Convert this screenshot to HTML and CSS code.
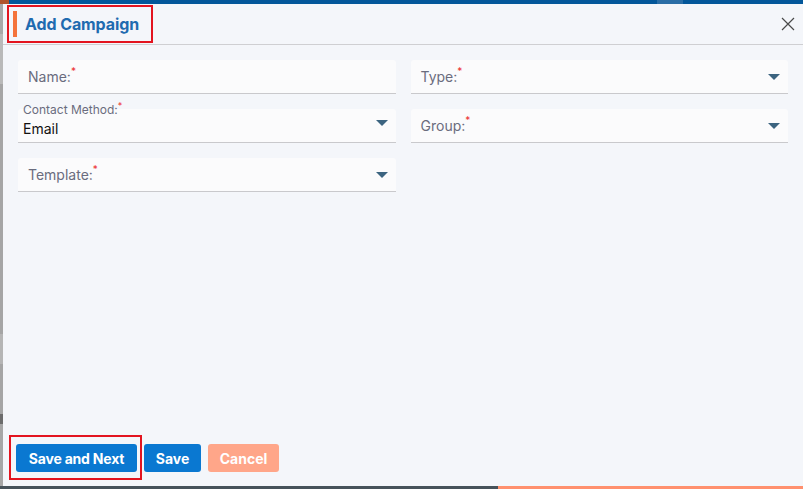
FILE: index.html
```html
<!DOCTYPE html>
<html>
<head>
<meta charset="utf-8">
<link rel="stylesheet" href="styles.css">
</head>
<body>
<div class="page">
  <div class="topbar"><span class="topbar-corner"></span><span class="topbar-fill"></span><span class="topbar-tab"></span><span class="topbar-fill2"></span></div>
  <div class="middle">
    <div class="leftstrip"></div>
    <div class="modal">
      <div class="modal-header">
        <div class="title-box">
          <span class="title-accent"></span>
          <h1 class="title">Add Campaign</h1>
        </div>
        <button class="close" aria-label="Close">
          <svg width="14" height="14" viewBox="0 0 14 14"><path d="M1 1 L13 13 M13 1 L1 13" stroke="#4a4a4a" stroke-width="1.2" fill="none"/></svg>
        </button>
      </div>
      <div class="modal-body">
        <div class="form-grid">
          <div class="field"><span class="label">Name:<sup class="req">*</sup></span></div>
          <div class="field"><span class="label">Type:<sup class="req">*</sup></span><span class="caret"></span></div>
          <div class="field field-filled">
            <span class="float-label">Contact Method:<sup class="req">*</sup></span>
            <span class="value">Email</span><span class="caret"></span>
          </div>
          <div class="field"><span class="label">Group:<sup class="req">*</sup></span><span class="caret"></span></div>
          <div class="field"><span class="label">Template:<sup class="req">*</sup></span><span class="caret"></span></div>
        </div>
      </div>
      <div class="modal-footer">
        <span class="mark"><button class="btn btn-primary btn-wide">Save and Next</button></span>
        <button class="btn btn-primary btn-save">Save</button>
        <button class="btn btn-cancel">Cancel</button>
      </div>
    </div>
  </div>
  <div class="bottombar"><span class="bottom-dark"></span><span class="bottom-orange"></span></div>
</div>
</body>
</html>
```

FILE: styles.css
```css
* { box-sizing: border-box; }
html, body { margin: 0; padding: 0; }
body {
  width: 803px;
  height: 489px;
  overflow: hidden;
  font-family: Inter, Roboto, "Liberation Sans", sans-serif;
  background: #f4f6fa;
}
.page {
  display: flex;
  flex-direction: column;
  width: 803px;
  height: 489px;
}
.topbar {
  display: flex;
  height: 4px;
  flex: none;
}
.topbar-corner { width: 9px; background: #b0542c; }
.topbar-fill { width: 648px; background: #03579a; }
.topbar-tab { width: 26px; background: #2b6ea6; }
.topbar-fill2 { flex: 1; background: #03579a; }
.middle {
  flex: 1;
  display: flex;
  min-height: 0;
}
.leftstrip {
  width: 3px;
  flex: none;
  background: linear-gradient(#a8a8a8 0 30px, #b9b9b9 30px 80px, #a5a5a5 80px 330px, #b5b5b5 330px 360px, #a5a5a5 360px 410px, #6c6c6c 410px 420px, #a6a6a6 420px);
}
.modal {
  flex: 1;
  display: flex;
  flex-direction: column;
  background: #f4f6fa;
}
.modal-header {
  height: 41px;
  flex: none;
  display: flex;
  align-items: center;
  justify-content: space-between;
  border-bottom: 1px solid #cfcfd2;
  padding: 0 7px 0 10px;
}
.title-box {
  display: flex;
  align-items: center;
  height: 26px;
  outline: 2px solid #e3141f;
  outline-offset: 4px;
  padding-right: 8px;
}
.title-accent {
  width: 4px;
  height: 26px;
  background: #f4733b;
  margin-right: 8px;
}
.title {
  margin: 0;
  font-size: 16px;
  font-weight: 700;
  color: #1f6bb0;
  letter-spacing: -0.1px;
}
.close {
  background: none;
  border: none;
  padding: 0;
  width: 16px;
  height: 16px;
  display: flex;
  align-items: center;
  justify-content: center;
  cursor: pointer;
}
.modal-body {
  flex: 1;
  padding: 15px 15px 0 15px;
}
.form-grid {
  display: grid;
  grid-template-columns: 1fr 1fr;
  column-gap: 15px;
  row-gap: 15px;
}
.field {
  position: relative;
  height: 34px;
  background: #fbfbfc;
  border-bottom: 1px solid #c9c9cc;
  border-radius: 3px 3px 0 0;
  display: flex;
  align-items: center;
  justify-content: space-between;
  padding: 0 8px 0 10px;
}
.label {
  font-size: 14px;
  color: #6a6c7e;
}
.req {
  color: #ec2f2f;
  font-size: 10px;
  vertical-align: top;
  position: relative;
  top: -3px;
}
.float-label .req { top: -4px; font-size: 9px; }
.field-filled {
  padding-left: 5px;
  align-items: flex-end;
  padding-bottom: 5px;
}
.field-filled .caret { align-self: center; }
.float-label {
  position: absolute;
  left: 5px;
  top: -6px;
  font-size: 12px;
  color: #6a6c7e;
  line-height: 14px;
}
.value {
  font-size: 14px;
  color: #111;
}
.caret {
  width: 0;
  height: 0;
  border-left: 6px solid transparent;
  border-right: 6px solid transparent;
  border-top: 6px solid #3c6480;
}
.modal-footer {
  flex: none;
  display: flex;
  align-items: center;
  gap: 7px;
  padding: 0 13px 14px 13px;
}
.mark {
  display: flex;
  padding: 7px 3px 6px 5px;
  margin: -7px -3px -6px -5px;
  outline: 2px solid #e3141f;
}
.btn {
  height: 28px;
  border: none;
  border-radius: 3px;
  font-family: inherit;
  font-size: 14px;
  font-weight: 700;
  color: #fff;
  padding: 0 12px;
  white-space: nowrap;
  cursor: pointer;
}
.btn-wide { width: 121px; padding: 0; letter-spacing: -0.2px; }
.btn-save { width: 57px; padding: 0; }
.btn-primary { background: #0a78d1; }
.btn-cancel { background: #ffa689; width: 71px; padding: 0; }
.bottombar {
  height: 3px;
  flex: none;
  display: flex;
}
.bottom-dark { width: 498px; background: #46525a; }
.bottom-orange { flex: 1; background: #ff906e; }
```
